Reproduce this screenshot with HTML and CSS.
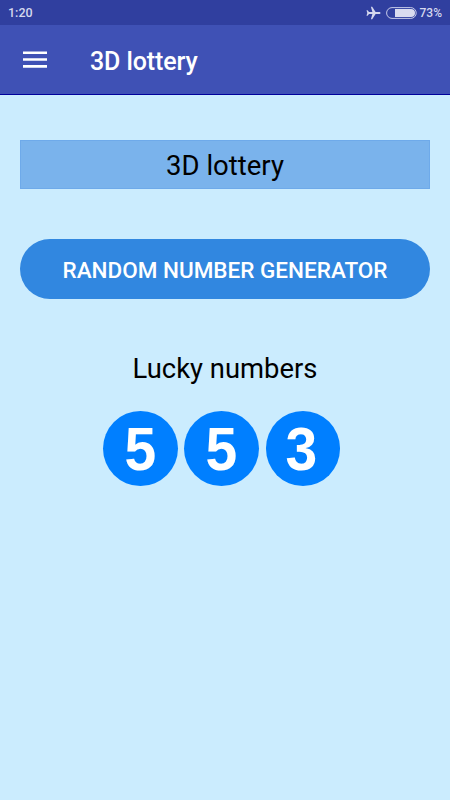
FILE: index.html
```html
<!DOCTYPE html>
<html lang="en">
<head>
  <meta charset="UTF-8" />
  <meta name="viewport" content="width=device-width, initial-scale=1" />
  <title>3D lottery</title>
  <link rel="stylesheet" href="styles.css">
</head>
<body>
  <div class="statusbar">
    <span class="clock">1:20</span>
    <svg class="plane" width="15" height="14" viewBox="0 0 15 14">
      <path d="M14.5 7c0-.7-.6-1-1.3-1H9.6L6.2.8H4.9L6.4 6H3L1.6 4.3H.5L1.3 7 .5 9.7h1.1L3 8h3.4L4.9 13.2h1.3L9.6 8h3.6c.7 0 1.3-.3 1.3-1z" fill="#d5d8ee" />
    </svg>
    <svg class="battery" width="31" height="12" viewBox="0 0 31 12">
      <rect x=".6" y=".6" width="29.6" height="10.8" rx="5.4" fill="none" stroke="#c5c9e8" />
      <path d="M9 2h16a4 4 0 0 1 0 8H9z" fill="#d9dbef" />
    </svg>
    <span class="percent">73%</span>
  </div>

  <header class="toolbar">
    <button class="menu-btn" aria-label="Menu">
      <svg width="24" height="18" viewBox="0 0 24 18">
        <path d="M0 .4h24V3H0zM0 7.2h24v2.6H0zM0 14.1h24v2.6H0z" fill="#fff" />
      </svg>
    </button>
    <h1>3D lottery</h1>
  </header>

  <main class="content">
    <h2 class="banner">3D lottery</h2>
    <button class="generate">RANDOM NUMBER GENERATOR</button>
    <p class="label">Lucky numbers</p>
    <div class="balls">
      <div class="ball"><span>5</span></div>
      <div class="ball"><span>5</span></div>
      <div class="ball"><span>3</span></div>
    </div>
  </main>
</body>
</html>
```
FILE: styles.css
```css
* {
  box-sizing: border-box;
}
body {
  margin: 0;
  min-height: 800px;
  background: #cbecfe;
  font-family: Roboto, sans-serif;
  color: #000;
}
button {
  border: none;
  padding: 0;
  font-family: inherit;
  cursor: pointer;
}
.statusbar {
  display: flex;
  align-items: center;
  height: 25px;
  padding: 0 8px;
  background: #303f9f;
  color: #d5d8ee;
  font-size: 12px;
  font-weight: 500;
}
.clock {
  margin-right: auto;
  font-size: 12.5px;
}
.plane {
  margin-right: 5px;
}
.battery {
  margin-right: 3px;
}
.toolbar {
  display: flex;
  align-items: center;
  height: 70px;
  padding-left: 23px;
  background: #3f51b5;
  border-bottom: 1px solid #00009c;
}
.menu-btn {
  display: flex;
  width: 67px;
  background: none;
}
.toolbar h1 {
  margin: 4px 0 0;
  color: #fff;
  font-size: 25px;
  line-height: 31px;
  font-weight: 500;
  letter-spacing: -0.1px;
}
.content {
  padding: 45px 20px 0;
}
.banner {
  height: 49px;
  margin: 0 0 50px;
  padding-top: 2px;
  background: #7ab3ec;
  border: 1px solid #6eaaea;
  font-size: 27.5px;
  line-height: 46px;
  font-weight: 400;
  text-align: center;
}
.generate {
  display: block;
  width: 100%;
  height: 60px;
  padding-top: 2px;
  border-radius: 30px;
  background: #3187e0;
  color: #fff;
  font-size: 22.5px;
  font-weight: 500;
}
.label {
  margin: 50px 0 22px;
  font-size: 27.4px;
  line-height: 40px;
  text-align: center;
}
.balls {
  display: flex;
  gap: 6.5px;
  padding-left: 83px;
}
.ball {
  display: flex;
  justify-content: center;
  width: 74.8px;
  height: 75px;
  border-radius: 50%;
  background: #007fff;
  color: #fff;
  font-family: "Liberation Sans", Arial, sans-serif;
  font-size: 62px;
  line-height: 75px;
  font-weight: bold;
}
.ball span {
  transform: scaleX(0.92);
}
.ball:last-child {
  padding-right: 4px;
}
```
